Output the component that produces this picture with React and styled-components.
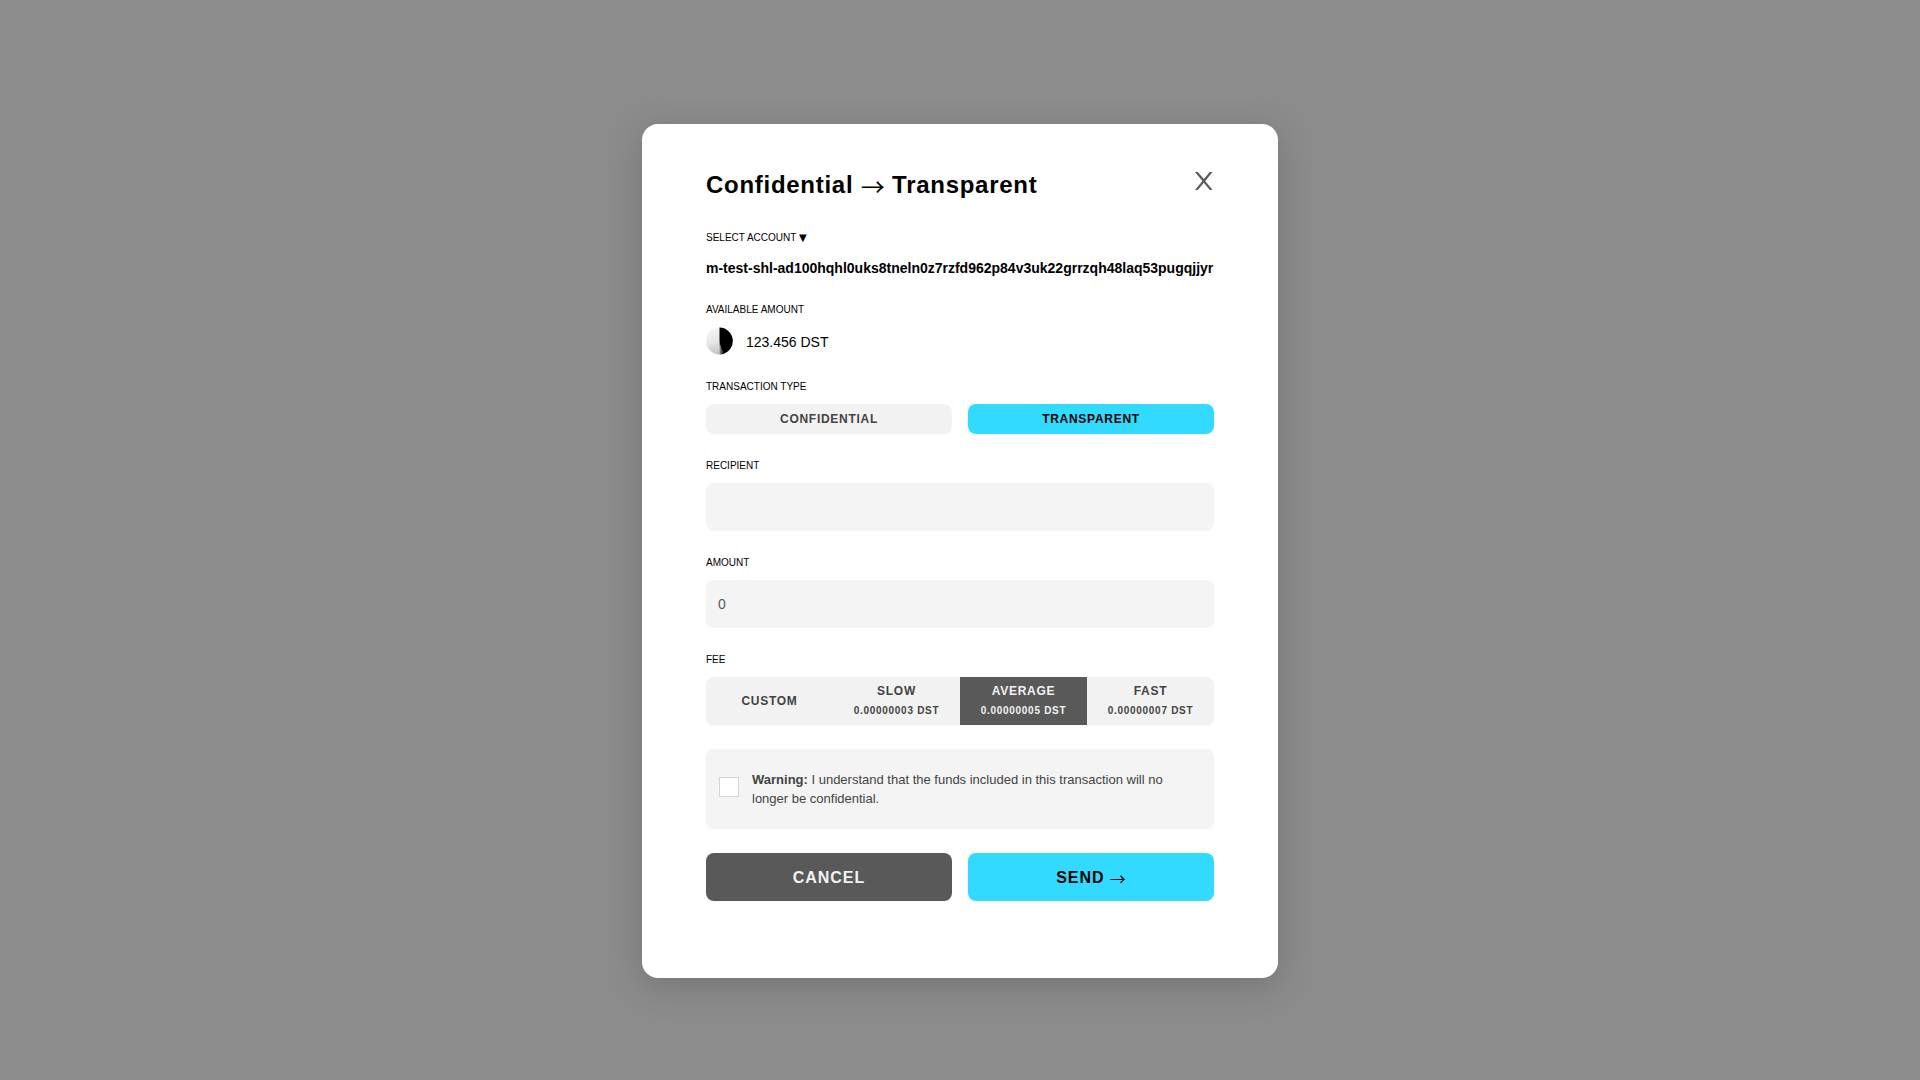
import React, { useState } from "react";
import styled, { createGlobalStyle, css } from "styled-components";

const color = {
  ink: "#000000",
  text: "#434343",
  dark: "#595959",
  field: "#f4f4f4",
  button: "#f2f2f2",
  accent: "#33daff",
};

const GlobalStyle = createGlobalStyle`
  *, *::before, *::after { box-sizing: border-box; }
  body {
    margin: 0;
    background: #8c8c8c;
    color: ${color.ink};
    font-family: "Liberation Sans", Arial, Helvetica, sans-serif;
  }
  button, input, select { font-family: inherit; }
`;

const Overlay = styled.main`
  min-height: 100vh;
  display: flex;
  align-items: center;
  justify-content: center;
  padding: 22px 0 0;
`;

const Modal = styled.form`
  width: 100%;
  max-width: 636px;
  display: flex;
  flex-direction: column;
  gap: 24px;
  padding: 40px 64px 77px;
  background: #fff;
  border-radius: 16px;
  box-shadow: 0 8px 36px rgba(0, 0, 0, 0.18);
`;

const Header = styled.header`
  display: flex;
  justify-content: space-between;
  align-items: flex-start;
`;

const Title = styled.h1`
  margin: 0;
  font-size: 24px;
  line-height: 42px;
  font-weight: 700;
  letter-spacing: 0.03em;
`;

const Arrow = styled.span`
  font-family: "Noto Sans CJK JP", sans-serif;
  font-weight: 400;
  line-height: 0;
  letter-spacing: 0;
  vertical-align: -0.12em;
`;

const Caret = styled.span`
  font-family: "DejaVu Sans", sans-serif;
  line-height: 0;
`;

const CloseButton = styled.button`
  display: flex;
  align-items: center;
  justify-content: center;
  width: 20px;
  height: 34px;
  padding: 0;
  border: 0;
  background: none;
  color: ${color.dark};
  cursor: pointer;
`;

const Field = styled.div`
  display: flex;
  flex-direction: column;
  gap: 10px;
`;

const labelText = css`
  font-size: 10px;
  line-height: 15px;
  text-transform: uppercase;
`;

const Label = styled.label`${labelText}`;
const Caption = styled.span`${labelText}`;

const AccountSelect = styled.select`
  appearance: none;
  width: 100%;
  height: 23px;
  padding: 3px 0 0;
  border: 0;
  background: none;
  color: ${color.ink};
  font-size: 14px;
  font-weight: 700;
  text-overflow: clip;
`;

const Balance = styled.div`
  display: flex;
  align-items: center;
  gap: 12px;
  height: 28px;
  font-size: 14px;
`;

const BalanceValue = styled.span`
  line-height: 16px;
  padding-top: 2px;
`;

const TextInput = styled.input`
  width: 100%;
  height: 48px;
  padding: 0 12px;
  border: 0;
  border-radius: 8px;
  background: ${color.field};
  color: ${color.dark};
  font-size: 14px;
`;

const ButtonRow = styled.div`
  display: grid;
  grid-template-columns: 1fr 1fr;
  gap: 16px;
`;

const tones = {
  light: css`background: ${color.button}; color: ${color.text};`,
  accent: css`background: ${color.accent}; color: ${color.ink};`,
  dark: css`background: ${color.dark}; color: ${color.button};`,
};

const Button = styled.button`
  height: ${(p) => (p.$large ? 48 : 30)}px;
  padding: ${(p) => (p.$large ? 2 : 0)}px 0 0;
  border: 0;
  border-radius: 8px;
  font-size: ${(p) => (p.$large ? 16 : 12)}px;
  font-weight: 700;
  letter-spacing: 0.06em;
  text-transform: uppercase;
  box-shadow: 0 2px 2px rgba(0, 0, 0, 0.02);
  cursor: pointer;
  ${(p) => tones[p.$tone]}
`;

const FeeGroup = styled.div`
  display: grid;
  grid-template-columns: repeat(4, 1fr);
  height: 48px;
  overflow: hidden;
  border-radius: 8px;
  box-shadow: 0 2px 2px rgba(0, 0, 0, 0.02);
`;

const FeeButton = styled.button`
  display: flex;
  flex-direction: column;
  align-items: center;
  justify-content: center;
  gap: 2px;
  padding: 0;
  border: 0;
  font-size: 12px;
  line-height: 18px;
  font-weight: 700;
  letter-spacing: 0.06em;
  cursor: pointer;
  ${(p) => tones[p.$active ? "dark" : "light"]}
`;

const FeeName = styled.span`
  text-transform: uppercase;
`;

const FeeAmount = styled.span`
  font-size: 10px;
`;

const Warning = styled.label`
  display: flex;
  align-items: flex-start;
  gap: 13px;
  padding: 21px 32px 21px 13px;
  border-radius: 8px;
  background: ${color.field};
  color: ${color.text};
  font-size: 13px;
  line-height: 19px;
`;

const Checkbox = styled.input`
  appearance: none;
  flex: none;
  width: 20px;
  height: 20px;
  margin: 7px 0 0;
  border: 1px solid #d4d4d4;
  background: #fff;
  &:checked { background: ${color.accent}; }
`;

const CloseIcon = () => (
  <svg width="20" height="20" viewBox="0 0 20 20" fill="currentColor" aria-hidden="true">
    <path d="M1 1h2.8l6 7.1L15.800 1h2.8l-7.4 9 7.4 9h-2.8l-6-7.2L3.800 19H1l7.4-9z" />
  </svg>
);

const TokenIcon = () => (
  <svg width="28" height="28" viewBox="0 0 28 28" aria-hidden="true">
    <defs>
      <linearGradient id="tokenLight" x1="0.3" y1="0" x2="0.6" y2="1">
        <stop offset="0" stopColor="#f4f4f4" />
        <stop offset="0.5" stopColor="#e6e6e6" />
        <stop offset="1" stopColor="#bcbcbc" />
      </linearGradient>
      <linearGradient id="tokenDark" x1="0" y1="0.5" x2="1" y2="0.5">
        <stop offset="0" stopColor="#999" />
        <stop offset="1" stopColor="#000" />
      </linearGradient>
    </defs>
    <circle cx="13.5" cy="14" r="13.4" fill="url(#tokenLight)" />
    <path d="M13.5.6a13.4 13.4 0 0 1 3.5 26.300C15 23 13.500 19 13.500 14z" fill="#000" />
    <path d="M13.500 14v13.400c1.500 0 3-.2 4.500-.700C16 23 14.300 19 13.500 14z" fill="url(#tokenDark)" />
  </svg>
);

const ACCOUNT = "m-test-shl-ad100hqhl0uks8tneln0z7rzfd962p84v3uk22grrzqh48laq53pugqjjyr";

const FEES = [
  { name: "Custom" },
  { name: "Slow", amount: "0.00000003 DST" },
  { name: "Average", amount: "0.00000005 DST" },
  { name: "Fast", amount: "0.00000007 DST" },
];

export default function App() {
  const [type, setType] = useState("Transparent");
  const [fee, setFee] = useState("Average");
  const [amount, setAmount] = useState("0");

  return (
    <>
      <GlobalStyle />
      <Overlay>
        <Modal onSubmit={(e) => e.preventDefault()}>
          <Header>
            <Title>Confidential <Arrow>→</Arrow> Transparent</Title>
            <CloseButton type="button" aria-label="Close"><CloseIcon /></CloseButton>
          </Header>

          <Field>
            <Label htmlFor="account">Select account <Caret>▼</Caret></Label>
            <AccountSelect id="account">
              <option>{ACCOUNT}</option>
            </AccountSelect>
          </Field>

          <Field>
            <Caption>Available amount</Caption>
            <Balance><TokenIcon /><BalanceValue>123.456 DST</BalanceValue></Balance>
          </Field>

          <Field>
            <Caption id="type">Transaction type</Caption>
            <ButtonRow role="group" aria-labelledby="type">
              {["Confidential", "Transparent"].map((name) => (
                <Button
                  key={name}
                  type="button"
                  aria-pressed={type === name}
                  $tone={type === name ? "accent" : "light"}
                  onClick={() => setType(name)}
                >
                  {name}
                </Button>
              ))}
            </ButtonRow>
          </Field>

          <Field>
            <Label htmlFor="recipient">Recipient</Label>
            <TextInput id="recipient" type="text" />
          </Field>

          <Field>
            <Label htmlFor="amount">Amount</Label>
            <TextInput id="amount" type="text" inputMode="decimal" value={amount} onChange={(e) => setAmount(e.target.value)} />
          </Field>

          <Field>
            <Caption id="fee">Fee</Caption>
            <FeeGroup role="group" aria-labelledby="fee">
              {FEES.map((f) => (
                <FeeButton
                  key={f.name}
                  type="button"
                  aria-pressed={fee === f.name}
                  $active={fee === f.name}
                  onClick={() => setFee(f.name)}
                >
                  <FeeName>{f.name}</FeeName>
                  {f.amount && <FeeAmount>{f.amount}</FeeAmount>}
                </FeeButton>
              ))}
            </FeeGroup>
          </Field>

          <Warning htmlFor="agree">
            <Checkbox id="agree" type="checkbox" />
            <span>
              <strong>Warning:</strong> I understand that the funds included in this transaction will no longer be confidential.
            </span>
          </Warning>

          <ButtonRow>
            <Button type="button" $large $tone="dark">Cancel</Button>
            <Button type="submit" $large $tone="accent">Send <Arrow>→</Arrow></Button>
          </ButtonRow>
        </Modal>
      </Overlay>
    </>
  );
}
